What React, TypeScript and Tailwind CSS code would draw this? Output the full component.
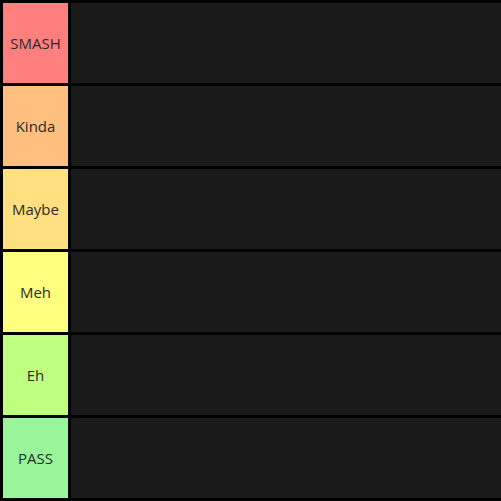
import React from 'react';

const tiers = [
  { label: 'SMASH', color: 'bg-[#ff7f7f]' },
  { label: 'Kinda', color: 'bg-[#ffbf7f]' },
  { label: 'Maybe', color: 'bg-[#ffdf7f]' },
  { label: 'Meh', color: 'bg-[#ffff7f]' },
  { label: 'Eh', color: 'bg-[#bfff7f]' },
  { label: 'PASS', color: 'bg-[#99f599]' },
];

export default function App() {
  return (
    <div className="w-[501px] h-[501px] bg-black flex flex-col gap-[3px] pt-[3px] pl-[3px] overflow-hidden font-['Open_Sans',sans-serif]">
      {tiers.map(t => (
        <div key={t.label} className="flex gap-[3px] h-[80px]">
          <div className={`w-[65px] flex items-center justify-center text-[15px] text-[#2b2b2b] ${t.color}`}>
            {t.label}
          </div>
          <div className="flex-1 bg-[#1a1a1a]" />
        </div>
      ))}
    </div>
  );
}
